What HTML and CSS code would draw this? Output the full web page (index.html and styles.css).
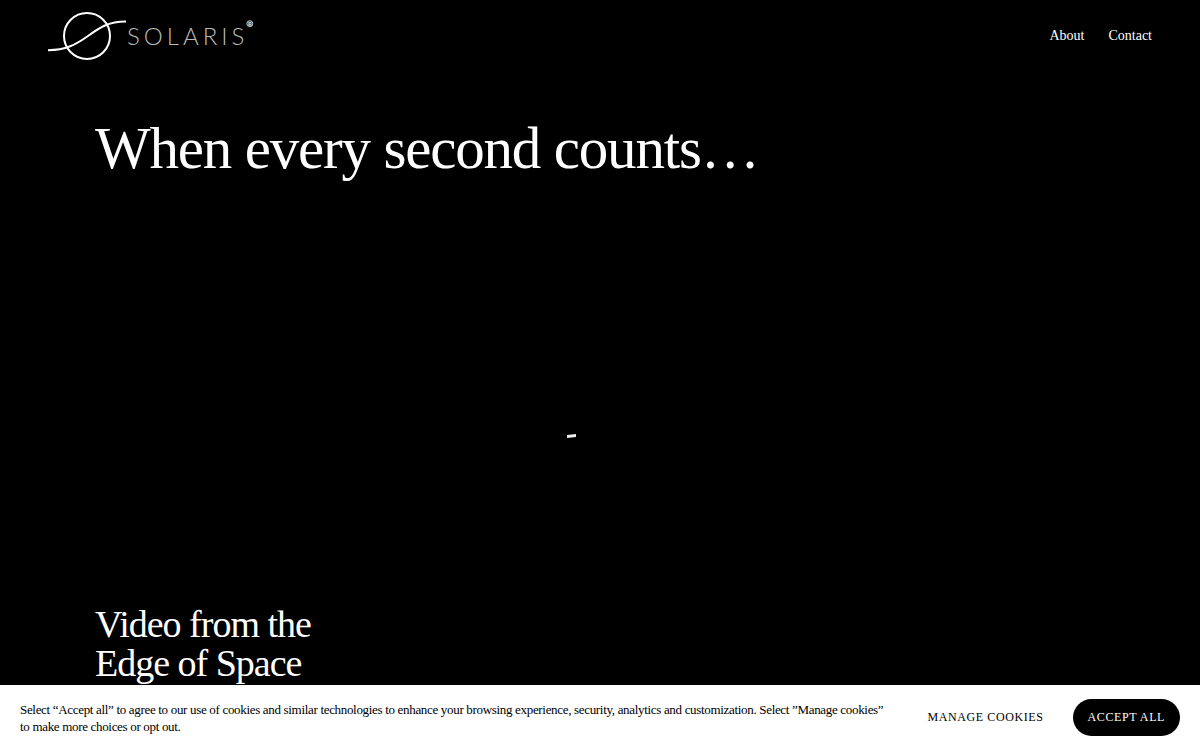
FILE: index.html
```html
<!DOCTYPE html>
<html lang="en">
<head>
  <meta charset="utf-8">
  <meta name="viewport" content="width=device-width, initial-scale=1">
  <title>Solaris</title>
  <link rel="stylesheet" href="styles.css">
</head>
<body>
  <header class="header">
    <a href="#" class="logo" aria-label="Solaris">
      <svg width="208" height="72" viewBox="0 0 208 72">
        <g fill="none" stroke="#fff" stroke-width="2">
          <circle cx="39" cy="36" r="23"/>
          <path d="M0 50.200 C18 50.200 28 44.500 40 36 C51 28 60 21.500 78 21.500"/>
        </g>
        <text class="logo-name" x="79" y="45">SOLARIS</text>
        <circle cx="201.800" cy="23.700" r="3" fill="#444" stroke="#bbb"/>
        <text class="logo-mark" x="200" y="26">R</text>
      </svg>
    </a>
    <nav class="nav">
      <a href="#about">About</a>
      <a href="#contact">Contact</a>
    </nav>
  </header>

  <main class="content">
    <h1>When every second counts…</h1>
    <svg class="video" viewBox="0 0 1010 425">
      <path d="M472 255 L481 254 V257 L472 258 Z" fill="#eee"/>
    </svg>
    <h2>Video from the<br>Edge of Space</h2>
  </main>

  <div class="cookies">
    <p>Select “Accept all” to agree to our use of cookies and similar technologies to enhance your browsing experience, security, analytics and customization. Select ”Manage cookies” to make more choices or opt out.</p>
    <div class="cookie-buttons">
      <button type="button" class="manage">MANAGE COOKIES</button>
      <button type="button" class="accept">ACCEPT ALL</button>
    </div>
  </div>
</body>
</html>
```
FILE: styles.css
```css
* { box-sizing: border-box; }
body { margin: 0; background: #000; color: #fff; letter-spacing: -0.02em;
  font-family: "Liberation Serif", "Times New Roman", serif; }

.header { display: flex; justify-content: space-between; align-items: center; padding: 0 48px; }
.logo { display: block; color: #fff; }
.logo svg { display: block; }
.logo-name { font: 300 24px Lato, sans-serif; letter-spacing: 4px; fill: #bbb; }
.logo-mark { font: 700 6px Lato, sans-serif; letter-spacing: 0; fill: #ddd; }
.nav { display: flex; gap: 24px; }
.nav a { color: #fff; font-size: 14px; line-height: 24px; letter-spacing: 0; text-decoration: none; }

.content { padding: 44px 95px 80px; }
h1, h2 { margin: 0; font-weight: 400; }
h1 { font-size: 59px; line-height: 64px; letter-spacing: -0.02em; }
h2 { font-size: 38px; line-height: 39px; letter-spacing: -1px; }
.video { display: block; width: 100%; height: 425px; }

.cookies { position: fixed; left: 0; right: 0; bottom: 0; display: flex; align-items: center;
  gap: 24px; padding: 14px 20px; background: #fff; color: #000; }
.cookies p { flex: 1; margin: 0; font-size: 13px; line-height: 17px; }
.cookie-buttons { display: flex; gap: 14px; }
button { height: 37px; padding: 0 15px; border: 0; border-radius: 20px; cursor: pointer;
  font-family: inherit; font-size: 12px; letter-spacing: 0.05em; white-space: nowrap; }
.manage { background: none; color: #000; }
.accept { background: #000; color: #fff; }
```
